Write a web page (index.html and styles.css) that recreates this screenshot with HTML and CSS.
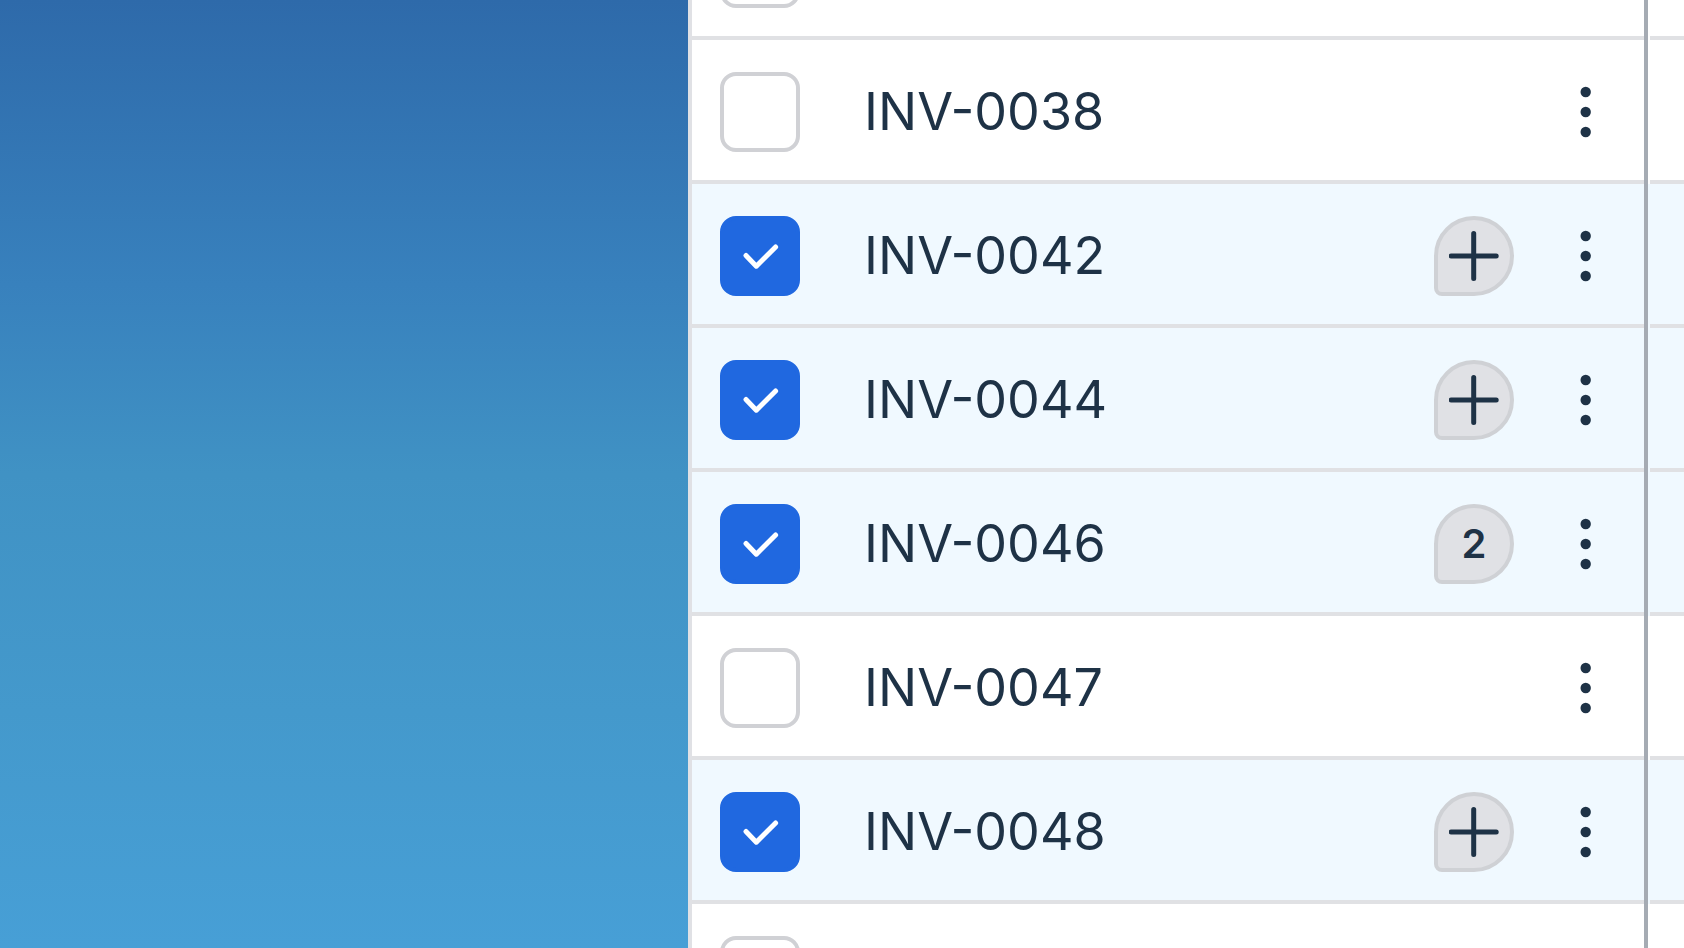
FILE: index.html
```
<!DOCTYPE html>
<html lang="en">
<head>
<meta charset="utf-8">
<title>Invoices</title>
<link rel="stylesheet" href="styles.css">
</head>
<body>
<svg class="sprite" aria-hidden="true">
  <symbol id="dots" viewBox="0 0 60 60"><circle cx="29.7" cy="10" r="5.2"/><circle cx="29.7" cy="30" r="5.2"/><circle cx="29.7" cy="50" r="5.2"/></symbol>
  <symbol id="plus" viewBox="0 0 50 50"><path d="M24.7 2.5V47.5M2.2 25H47.2"/></symbol>
  <symbol id="check" viewBox="0 0 80 80"><path d="M26 39.5L36.3 50.2L55.6 31"/></symbol>
</svg>
<div class="page">
  <aside class="backdrop"></aside>
  <main class="pane">
    <table class="grid">
      <tbody>
        <tr>
          <td class="cell"><div class="row"><span class="check"><input type="checkbox" aria-label="Select invoice"></span></div></td>
          <td class="next"><div class="line"></div></td>
        </tr>
        <tr>
          <td class="cell"><div class="row"><span class="check"><input type="checkbox" id="i38"></span><label class="name" for="i38">INV-0038</label><button class="menu" aria-label="Actions"><svg><use href="#dots"/></svg></button></div></td>
          <td class="next"><div class="line"></div></td>
        </tr>
        <tr class="selected">
          <td class="cell"><div class="row"><span class="check"><input type="checkbox" id="i42" checked><svg><use href="#check"/></svg></span><label class="name" for="i42">INV-0042</label><button class="note" aria-label="Add comment"><svg><use href="#plus"/></svg></button><button class="menu" aria-label="Actions"><svg><use href="#dots"/></svg></button></div></td>
          <td class="next"><div class="line"></div></td>
        </tr>
        <tr class="selected">
          <td class="cell"><div class="row"><span class="check"><input type="checkbox" id="i44" checked><svg><use href="#check"/></svg></span><label class="name" for="i44">INV-0044</label><button class="note" aria-label="Add comment"><svg><use href="#plus"/></svg></button><button class="menu" aria-label="Actions"><svg><use href="#dots"/></svg></button></div></td>
          <td class="next"><div class="line"></div></td>
        </tr>
        <tr class="selected">
          <td class="cell"><div class="row"><span class="check"><input type="checkbox" id="i46" checked><svg><use href="#check"/></svg></span><label class="name" for="i46">INV-0046</label><button class="note">2</button><button class="menu" aria-label="Actions"><svg><use href="#dots"/></svg></button></div></td>
          <td class="next"><div class="line"></div></td>
        </tr>
        <tr>
          <td class="cell"><div class="row"><span class="check"><input type="checkbox" id="i47"></span><label class="name" for="i47">INV-0047</label><button class="menu" aria-label="Actions"><svg><use href="#dots"/></svg></button></div></td>
          <td class="next"><div class="line"></div></td>
        </tr>
        <tr class="selected">
          <td class="cell"><div class="row"><span class="check"><input type="checkbox" id="i48" checked><svg><use href="#check"/></svg></span><label class="name" for="i48">INV-0048</label><button class="note" aria-label="Add comment"><svg><use href="#plus"/></svg></button><button class="menu" aria-label="Actions"><svg><use href="#dots"/></svg></button></div></td>
          <td class="next"><div class="line"></div></td>
        </tr>
        <tr>
          <td class="cell"><div class="row"><span class="check"><input type="checkbox" aria-label="Select invoice"></span></div></td>
          <td class="next"><div class="line"></div></td>
        </tr>
      </tbody>
    </table>
  </main>
</div>
</body>
</html>
```
FILE: styles.css
```
* { box-sizing: border-box; }

body {
  margin: 0;
  background: #fff;
  color: #1e3246;
  font-family: Inter, "Liberation Sans", sans-serif;
}

.sprite { display: none; }

.page {
  display: flex;
  height: 100vh;
  overflow: hidden;
}

.backdrop {
  flex: 0 0 688px;
  background: linear-gradient(180deg, #2e6aaa 0%, #3881bd 30%, #4092c4 50%, #4499cc 75%, #479fd6 100%);
}

.pane {
  flex: 1;
  min-width: 0;
  border-left: 4px solid #e0e1e5;
}

/* The list is scrolled so that its first row is cut by the top edge. */
.grid {
  width: 100%;
  margin-top: -104px;
  border-collapse: separate;
  border-spacing: 0;
  table-layout: fixed;
}

.cell {
  padding: 0;
  border-right: 4px solid #a5abb3;
}

.next {
  width: 36px;
  padding: 0 0 0 2px;
}

.row {
  display: flex;
  align-items: center;
  height: 144px;
  padding: 4px 28px 0;
  border-bottom: 4px solid #e0e1e4;
}

.line {
  height: 144px;
  border-bottom: 4px solid #e0e1e4;
}

.selected { background: #f0f9ff; }

.check {
  position: relative;
  flex: none;
  width: 80px;
  height: 80px;
}

.check input {
  appearance: none;
  display: block;
  width: 80px;
  height: 80px;
  margin: 0;
  border: 4px solid #d0d1d5;
  border-radius: 16px;
  background: #fff;
}

.check input:checked {
  border-color: #2068e0;
  background: #2068e0;
}

.check svg {
  position: absolute;
  inset: 0;
  width: 80px;
  height: 80px;
  fill: none;
  stroke: #fff;
  stroke-width: 5;
  stroke-linecap: round;
  stroke-linejoin: round;
  pointer-events: none;
}

.name {
  flex: 1;
  padding-left: 64px;
  font-size: 52px;
  line-height: 80px;
  font-optical-sizing: none;
  font-feature-settings: "case";
}

.note,
.menu {
  display: flex;
  align-items: center;
  justify-content: center;
  flex: none;
  height: 80px;
  padding: 0;
  color: inherit;
  font: 600 40px/72px Inter, "Liberation Sans", sans-serif;
}

.note {
  width: 80px;
  margin-right: 42px;
  border: 4px solid #cfd1d5;
  border-radius: 40px 40px 40px 8px;
  background: #e0e1e5;
}

.note svg {
  width: 50px;
  height: 50px;
  fill: none;
  stroke: #1e3246;
  stroke-width: 5;
  stroke-linecap: round;
}

.menu {
  width: 60px;
  border: 0;
  background: none;
}

.menu svg {
  width: 60px;
  height: 60px;
  fill: #1e3246;
}
```
